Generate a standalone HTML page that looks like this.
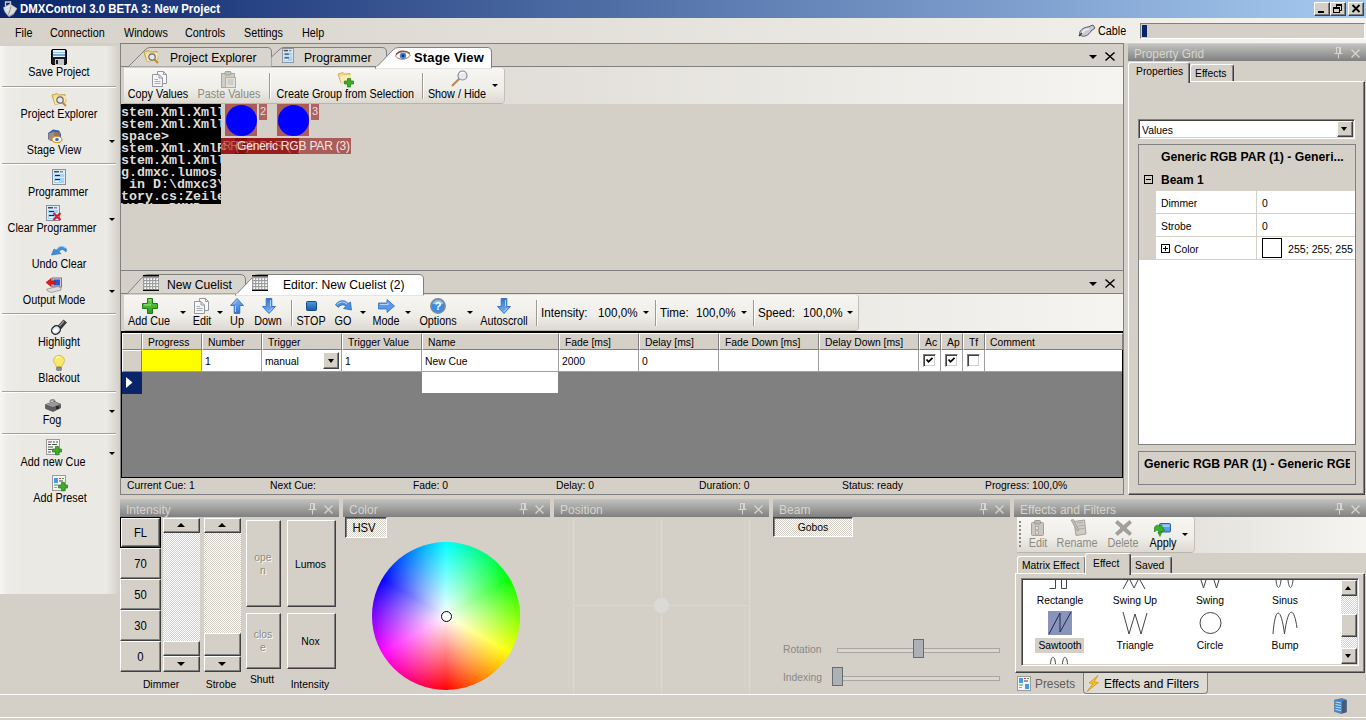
<!DOCTYPE html>
<html lang="en">
<head>
<meta charset="utf-8">
<title>DMXControl 3.0 BETA 3: New Project</title>
<style>
html,body{margin:0;padding:0}
body{width:1366px;height:720px;background:#d4d0c8;font-family:"Liberation Sans",sans-serif;font-size:11px;color:#000;position:relative;overflow:hidden}
.a{position:absolute}
.t{position:absolute;white-space:nowrap;line-height:14px;height:14px}
.c{text-align:center}
.f12{font-size:12px;transform:scaleX(.9);transform-origin:0 50%}
.f12.c,.f13.c{transform-origin:50% 50%}
.f13{font-size:13px;transform:scaleX(.935);transform-origin:0 50%}
.ms{font-size:11px;transform:scaleX(.94);transform-origin:0 50%}
.ms.c{transform-origin:50% 50%}
.b{font-weight:bold}
.dis{color:#8d8a82}
.sepv{position:absolute;width:1px;background:#9d9a93;box-shadow:1px 0 0 #fff}
.seph{position:absolute;height:1px;background:#a5a29b;box-shadow:0 1px 0 #fff;left:2px;width:114px}
.arr{position:absolute;width:0;height:0;border-left:3px solid transparent;border-right:3px solid transparent;border-top:3px solid #000}
.btn{position:absolute;background:#d4d0c8;box-sizing:border-box;border:1px solid;border-color:#fff #404040 #404040 #fff;box-shadow:inset -1px -1px 0 #808080, inset 1px 1px 0 #d4d0c8}
.sunk{position:absolute;box-sizing:border-box;border:1px solid;border-color:#808080 #fff #fff #808080}
.cap{position:absolute;height:17px;background:linear-gradient(#c2c2c0,#808080);color:#d8d5cd;font-size:13px;line-height:17px;white-space:nowrap}
svg{position:absolute;overflow:visible}
</style>
</head>
<body>
<svg width="0" height="0" style="left:0;top:0"><defs><linearGradient id="gb" x1="0" y1="0" x2="0" y2="1"><stop offset="0" stop-color="#7db4f2"/><stop offset="1" stop-color="#3474cf"/></linearGradient><linearGradient id="gs" x1="0" y1="0" x2="0" y2="1"><stop offset="0" stop-color="#4f9be2"/><stop offset="1" stop-color="#1a5aa6"/></linearGradient><linearGradient id="gg" x1="0" y1="0" x2="0" y2="1"><stop offset="0" stop-color="#6fd24f"/><stop offset="1" stop-color="#2c9a1c"/></linearGradient></defs></svg>
<!-- TITLE BAR -->
<div class="a" id="titlebar" style="left:0;top:0;width:1366px;height:18px;background:linear-gradient(90deg,#0a246a,#a6caf0)"></div>
<div class="t b" style="left:20px;top:2px;color:#fff;font-size:12px;transform:scaleX(.952);transform-origin:0 50%">DMXControl 3.0 BETA 3: New Project</div>
<!-- MENU BAR -->
<div class="a" id="menubar" style="left:0;top:18px;width:1366px;height:25px;background:linear-gradient(90deg,#d6d2ca,#f5f4f0)"></div>
<!-- title icon -->
<svg style="left:2px;top:0px" width="17" height="18" viewBox="0 0 17 18"><path d="M3.500 6 V2 H8.500 V5" fill="none" stroke="#cfcfcf" stroke-width="1.300"/><path d="M1.500 7.500 L8 4 L15 8.500 L11.500 14 L7 16.500 C4 14 2 11 1.500 7.500Z" fill="#dadada" stroke="#b5b5b5" stroke-width="0.600"/><path d="M9 6.500 L6.500 14.500" stroke="#8a8a8a" stroke-width="0.900"/><path d="M11.500 14 L7 16.500" stroke="#9a9a9a" stroke-width="1.200"/><path d="M3.500 8 L7 6.500 M3.800 10.500 L7.500 9" stroke="#f4f4f4" stroke-width="1"/></svg>
<!-- window buttons -->
<div class="btn" style="left:1314px;top:2px;width:16px;height:14px"></div>
<div class="a" style="left:1318px;top:11px;width:6px;height:2px;background:#000"></div>
<div class="btn" style="left:1330px;top:2px;width:16px;height:14px"></div>
<svg style="left:1333px;top:4px" width="10" height="10" viewBox="0 0 10 10"><path d="M3.5 1 H8.5 V6.5 H6.5 M3.5 1 V3 M3 0.5 H9" fill="none" stroke="#000" stroke-width="1"/><path d="M3 0 H9 V2 H3Z" fill="#000"/><rect x="0.5" y="3.5" width="6" height="5" fill="none" stroke="#000"/><rect x="0" y="3" width="7" height="2" fill="#000"/></svg>
<div class="btn" style="left:1348px;top:2px;width:16px;height:14px"></div>
<svg style="left:1352px;top:5px" width="8" height="7" viewBox="0 0 8 7"><path d="M0.5 0 L7.5 7 M7.5 0 L0.5 7" stroke="#000" stroke-width="1.8"/></svg>
<!-- menu items -->
<div class="t f12" style="left:15px;top:26px">File</div>
<div class="t f12" style="left:50px;top:26px">Connection</div>
<div class="t f12" style="left:124px;top:26px">Windows</div>
<div class="t f12" style="left:185px;top:26px">Controls</div>
<div class="t f12" style="left:244px;top:26px">Settings</div>
<div class="t f12" style="left:302px;top:26px">Help</div>
<svg style="left:1078px;top:23px" width="18" height="16" viewBox="0 0 18 16"><path d="M2 12 C0 8 6 4 10 4 L15 2 L17 5 L13 8 C11 12 6 15 2 12Z" fill="#c8ccd2" stroke="#555b66" stroke-width="1"/><path d="M4 11 C5 8 8 6 11 6" stroke="#fff" stroke-width="1.2" fill="none"/><path d="M1 13 L4 10" stroke="#333" stroke-width="1.5"/></svg>
<div class="t f12" style="left:1098px;top:24px">Cable</div>
<div class="sunk" style="left:1140px;top:23px;width:225px;height:16px;background:#d4d0c8"></div>
<div class="a" style="left:1142px;top:25px;width:5px;height:12px;background:#0a246a"></div>
<!-- LEFT TOOLBAR -->
<div class="a" id="lefttb" style="left:0;top:46px;width:118px;height:548px;background:linear-gradient(90deg,#f7f6f3 0,#eeece8 6%,#ebe9e4 20%,#ebe9e4 90%,#d6d3cb 100%);border-radius:0 0 4px 0"></div>
<!-- left toolbar items -->
<svg style="left:51px;top:49px" width="16" height="16" viewBox="0 0 16 16"><rect x="0.5" y="0.5" width="15" height="15" rx="1.5" fill="#1c1c1e" stroke="#000"/><rect x="2" y="1" width="12" height="7" fill="#e8f2fc"/><rect x="2" y="3" width="12" height="1" fill="#9cc3ea"/><rect x="2" y="5" width="12" height="2" fill="#6ea8e0"/><rect x="4" y="10" width="9" height="6" fill="#c8c8cc"/><rect x="5" y="11" width="2" height="4" fill="#1c1c1e"/></svg>
<div class="t f12 c" style="left:9px;top:65px;width:100px">Save Project</div>
<div class="seph" style="top:86px"></div>
<svg style="left:51px;top:92px" width="16" height="16" viewBox="0 0 16 16"><path d="M1 3 L6 1.5 L7.5 3 L14 2.5 L15 10 L4 12.5 Z" fill="#f1d98a" stroke="#b8962e" stroke-width="0.8"/><path d="M3 5 L15 4 L14.5 10.5 L4 12.5Z" fill="#f7e7a9"/><circle cx="9" cy="8" r="3.2" fill="#dfeaf5" stroke="#6b6b6b" stroke-width="1.2"/><path d="M11.5 10.5 L15 14" stroke="#c48a2a" stroke-width="2"/></svg>
<div class="t f12 c" style="left:8.5px;top:107px;width:100px">Project Explorer</div>
<svg style="left:47px;top:129px" width="16" height="15" viewBox="0 0 16 15"><path d="M1 4 L6 0.5 L12 1.5 L14 5 L14 10 L4 12 L1 10Z" fill="#2f5fb4"/><path d="M1.5 4.5 L7 2.5 L7 11 L3 11.5 L1.5 10Z" fill="#a58b78"/><path d="M7 2.5 L13 3.5 L13 7 L7 9Z" fill="#8d7766"/><ellipse cx="10" cy="10.5" rx="5" ry="3" fill="#fff" stroke="#e29a1e" stroke-width="1.2"/><circle cx="10" cy="10.5" r="1.8" fill="#3a78b8"/></svg>
<div class="t f12 c" style="left:3.5px;top:143px;width:100px">Stage View</div>
<div class="arr" style="left:109px;top:140px"></div>
<div class="seph" style="top:163px"></div>
<svg style="left:52px;top:169px" width="14" height="16" viewBox="0 0 14 16"><rect x="0.5" y="0.5" width="13" height="15" fill="#d9ecfb" stroke="#8a8f99"/><rect x="2" y="2" width="5" height="1.5" fill="#4a4a4a"/><rect x="8" y="2" width="3" height="1.5" fill="#888"/><rect x="2" y="5" width="10" height="3" fill="#a7d1f5"/><rect x="3" y="6" width="5" height="1" fill="#222"/><rect x="2" y="9" width="10" height="5" fill="#a7d1f5"/><rect x="3" y="10" width="5" height="1" fill="#222"/><rect x="3" y="12" width="4" height="1" fill="#fff"/></svg>
<div class="t f12 c" style="left:8px;top:185px;width:100px">Programmer</div>
<svg style="left:46px;top:205px" width="16" height="16" viewBox="0 0 16 16"><g><rect x="0.5" y="0.5" width="13" height="15" fill="#d9ecfb" stroke="#8a8f99"/><rect x="2" y="2" width="5" height="1.5" fill="#4a4a4a"/><rect x="8" y="2" width="3" height="1.5" fill="#888"/><rect x="2" y="5" width="10" height="3" fill="#a7d1f5"/><rect x="3" y="6" width="5" height="1" fill="#222"/><rect x="2" y="9" width="10" height="5" fill="#a7d1f5"/><rect x="3" y="10" width="5" height="1" fill="#222"/><rect x="3" y="12" width="4" height="1" fill="#fff"/></g><path d="M7.5 8 L14.5 15 M14.5 8 L7.5 15" stroke="#e01b24" stroke-width="2.2"/></svg>
<div class="t f12 c" style="left:2px;top:221px;width:100px">Clear Programmer</div>
<div class="arr" style="left:109px;top:218px"></div>
<svg style="left:51px;top:243px" width="16" height="13" viewBox="0 0 16 13"><path d="M0.5 12 L3 6 L5.5 7.5 C7 3 12 2 15.5 6 L15 9 C12 5.5 9 6 8 9 L10 10.5 Z" fill="#3d8fe0" stroke="#1f66b8" stroke-width="0.6"/><path d="M6 6 C8 2.5 12 2.5 14.5 5" stroke="#9fd0fa" stroke-width="1.2" fill="none"/></svg>
<div class="t f12 c" style="left:8.5px;top:257px;width:100px">Undo Clear</div>
<svg style="left:46px;top:277px" width="16" height="16" viewBox="0 0 16 16"><rect x="6" y="1" width="9.5" height="9" fill="#d0d0d0" stroke="#777"/><rect x="7.5" y="2.5" width="6.5" height="6" fill="#2458d8"/><path d="M1 12 L12 9.5 L15 11 L15 13 L5 15.5 L1 13.5Z" fill="#dcdcdc" stroke="#8a8a8a" stroke-width="0.7"/><path d="M0 5.5 L5 1.5 L5 4 L9 4 L9 7 L5 7 L5 9.5Z" fill="#e21c1c" stroke="#a00" stroke-width="0.5"/></svg>
<div class="t f12 c" style="left:3.5px;top:293px;width:100px">Output Mode</div>
<div class="arr" style="left:109px;top:290px"></div>
<div class="seph" style="top:313px"></div>
<svg style="left:51px;top:319px" width="16" height="16" viewBox="0 0 16 16"><path d="M6 8 L12.5 1 L15.5 3.5 L9 11Z" fill="#3a3a3a" stroke="#111" stroke-width="0.6"/><path d="M8 7.5 L13 2" stroke="#9a9a9a" stroke-width="1.2"/><ellipse cx="5" cy="11" rx="4.6" ry="4" transform="rotate(-40 5 11)" fill="#d8e6f2" stroke="#222" stroke-width="1.3"/><ellipse cx="4.5" cy="11.5" rx="2.5" ry="2" transform="rotate(-40 4.5 11.5)" fill="#fff"/></svg>
<div class="t f12 c" style="left:9px;top:335px;width:100px">Highlight</div>
<svg style="left:53px;top:355px" width="12" height="16" viewBox="0 0 12 16"><path d="M6 0.5 C2.5 0.5 0.5 3 0.5 5.5 C0.5 8 3 9.5 3.5 12 L8.5 12 C9 9.5 11.500 8 11.5 5.500 C11.5 3 9.5 0.5 6 0.5Z" fill="#f6ea6c" stroke="#c9b23a" stroke-width="0.8"/><path d="M3 3.5 C4 2 6 1.800 7 2.200" stroke="#fffbd0" stroke-width="1.4" fill="none"/><rect x="3.5" y="12" width="5" height="3.500" rx="1" fill="#8a8c94" stroke="#555" stroke-width="0.5"/></svg>
<div class="t f12 c" style="left:8.5px;top:371px;width:100px">Blackout</div>
<div class="seph" style="top:391px"></div>
<svg style="left:45px;top:399px" width="16" height="13" viewBox="0 0 16 13"><path d="M5 3 C5 0 10 0 10 3" fill="none" stroke="#888" stroke-width="1.3"/><path d="M0.5 5.500 L9 2.500 L15.5 5 L15.5 9 L8 12.500 L0.5 9.500Z" fill="#5e5e5e" stroke="#3a3a3a" stroke-width="0.6"/><path d="M0.5 5.500 L9 2.500 L15.500 5 L8 8Z" fill="#9a9a9a"/><rect x="11" y="7" width="3" height="3" fill="#2a2a2a"/></svg>
<div class="t f12 c" style="left:2px;top:413px;width:100px">Fog</div>
<div class="arr" style="left:109px;top:410px"></div>
<div class="seph" style="top:433px"></div>
<svg style="left:46px;top:439px" width="16" height="16" viewBox="0 0 16 16"><rect x="0.5" y="0.5" width="13" height="15" fill="#f4f4f4" stroke="#9a9a9a"/><path d="M2 3 H6 M7 3 H9 M10 3 H12 M2 5.500 H5 M6 5.500 H11 M2 8 H7 M2 10.500 H6 M2 13 H5" stroke="#555" stroke-width="1"/><path d="M9.500 7.500 H12.500 V10 H15.500 V13 H12.500 V15.800 H9.500 V13 H6.500 V10 H9.500Z" fill="#3fae2a" stroke="#1f7a12" stroke-width="0.7"/></svg>
<div class="t f12 c" style="left:2.5px;top:455px;width:100px">Add new Cue</div>
<div class="arr" style="left:109px;top:452px"></div>
<svg style="left:52px;top:475px" width="16" height="16" viewBox="0 0 16 16"><rect x="0.5" y="0.5" width="13" height="15" fill="#f4f4f4" stroke="#9a9a9a"/><rect x="2" y="3" width="4" height="5" fill="#4a98e8"/><path d="M7 3.500 H9" stroke="#d33" stroke-width="1"/><path d="M10 3.500 H12" stroke="#3a3" stroke-width="1"/><path d="M7 6 H11" stroke="#444" stroke-width="1"/><path d="M2 10 H6" stroke="#3a3" stroke-width="1"/><path d="M2 12.500 H5" stroke="#d93" stroke-width="1"/><path d="M9.500 7.500 H12.500 V10 H15.500 V13 H12.500 V15.800 H9.500 V13 H6.500 V10 H9.500Z" fill="#3fae2a" stroke="#1f7a12" stroke-width="0.7"/></svg>
<div class="t f12 c" style="left:9.5px;top:491px;width:100px">Add Preset</div>
<!-- DOC PANE 1 -->
<div class="a" id="pane1" style="left:120px;top:43px;width:1004px;height:228px;box-sizing:border-box;border:1px solid #808080;background:#d4d0c8"></div>
<div class="a" style="left:121px;top:66px;width:1002px;height:1px;background:#808080"></div>
<div class="a" id="tbpanel1" style="left:121px;top:67px;width:1002px;height:37px;background:linear-gradient(90deg,#d4d0c8,#f5f4f1)"></div>
<div class="a" id="ts1" style="left:124px;top:68px;width:380px;height:35px;background:linear-gradient(#f7f6f3,#efede8 60%,#dcd9d1);border-radius:0 3px 3px 0;box-shadow:1px 0 0 #c2bfb7, 0 1px 0 #b8b5ad"></div>
<!-- tabs 1 -->
<svg style="left:121px;top:44px" width="380" height="24" viewBox="0 0 380 24">
<path d="M7.5 22.500 L24 6 Q26 3.500 29 3.500 L146 3.500 Q150.500 3.500 150.500 8 L150.500 22.500" fill="#d8d5ce" stroke="#808080"/>
<path d="M150.500 13 L158 6 Q160 3.500 163 3.500 L261 3.500 Q265.500 3.500 265.500 8 L265.500 22.500 L150.500 22.500" fill="#d8d5ce" stroke="#808080"/>
<path d="M256 22.500 L272 6 Q274 3.500 278 3.500 L366 3.500 Q370.500 3.500 370.500 8 L370.500 24 L254 24 Z" fill="#ffffff" stroke="#808080"/>
<rect x="255" y="22.600" width="115" height="2" fill="#fff"/>
</svg>
<div class="t f13" style="left:170px;top:51px">Project Explorer</div>
<div class="t f13" style="left:304px;top:51px">Programmer</div>
<div class="t b" style="left:414px;top:51px;font-size:13px;letter-spacing:0.150px">Stage View</div>
<div class="arr" style="left:1089px;top:55px;border-left-width:4px;border-right-width:4px;border-top-width:4px"></div>
<svg style="left:1105px;top:52px" width="10" height="9" viewBox="0 0 10 9"><path d="M0.500 0.500 L9.500 8.500 M9.500 0.500 L0.500 8.500" stroke="#000" stroke-width="1.500"/></svg>
<!-- tab icons 1 -->
<svg style="left:143px;top:49px" width="16" height="16" viewBox="0 0 16 16"><path d="M1 3 L6 1.500 L7.500 3 L14 2.500 L15 10 L4 12.500 Z" fill="#f1d98a" stroke="#b8962e" stroke-width="0.800"/><path d="M3 5 L15 4 L14.500 10.500 L4 12.500Z" fill="#f7e7a9"/><circle cx="9" cy="8" r="3.200" fill="#dfeaf5" stroke="#6b6b6b" stroke-width="1.200"/><path d="M11.500 10.500 L15 14" stroke="#c48a2a" stroke-width="2"/></svg>
<svg style="left:282px;top:48px" width="12" height="15" viewBox="0 0 14 16" preserveAspectRatio="none"><rect x="0.500" y="0.500" width="13" height="15" fill="#d9ecfb" stroke="#8a8f99"/><rect x="2" y="2" width="5" height="1.500" fill="#4a4a4a"/><rect x="8" y="2" width="3" height="1.500" fill="#888"/><rect x="2" y="5" width="10" height="3" fill="#a7d1f5"/><rect x="3" y="6" width="5" height="1" fill="#222"/><rect x="2" y="9" width="10" height="5" fill="#a7d1f5"/><rect x="3" y="10" width="5" height="1" fill="#222"/><rect x="3" y="12" width="4" height="1" fill="#fff"/></svg>
<svg style="left:395px;top:50px" width="16" height="12" viewBox="0 0 16 12"><path d="M0.500 6 C3 1 11 0 15.500 5 C12 10 4 11 0.500 6Z" fill="#fff" stroke="#b0705a" stroke-width="1"/><path d="M1 4.500 C4 0.500 11 0 15 3.500" stroke="#8a4a3a" stroke-width="1.300" fill="none"/><circle cx="8" cy="5.800" r="3.200" fill="#3a8ad8"/><circle cx="8" cy="5.800" r="1.400" fill="#123"/></svg>
<!-- toolbar 1 items -->
<svg style="left:152px;top:71px" width="16" height="16" viewBox="0 0 16 16"><path d="M5.500 0.500 H11.500 L14.500 3.500 V12.500 H5.500Z" fill="#fbfbfb" stroke="#9398a0"/><path d="M11.500 0.500 V3.500 H14.500" fill="none" stroke="#9398a0"/><path d="M0.500 3.500 H7 L10.500 7 V15.500 H0.500Z" fill="#f6f6f6" stroke="#9398a0"/><path d="M7 3.500 V7 H10.500" fill="none" stroke="#9398a0"/><path d="M2.500 8.500 H6 M2.500 10.500 H8.500 M2.500 12.500 H8.500" stroke="#a9acb2" stroke-width="1"/></svg>
<div class="t f12 c" style="left:108px;top:87px;width:100px">Copy Values</div>
<svg style="left:221px;top:71px" width="16" height="17" viewBox="0 0 16 17"><rect x="0.500" y="2.500" width="13" height="14" fill="#d0cdc6" stroke="#aaa7a0"/><rect x="4" y="0.500" width="6" height="3.500" rx="1" fill="#c4c1ba" stroke="#a29f98"/><rect x="4.500" y="6.500" width="10" height="10" fill="#e4e2dc" stroke="#b0ada6"/><path d="M6.500 9 H12.500 M6.500 11 H12.500 M6.500 13 H12.500" stroke="#bbb8b1" stroke-width="1"/></svg>
<div class="t f12 c dis" style="left:179px;top:87px;width:100px">Paste Values</div>
<div class="sepv" style="left:269px;top:73px;height:26px"></div>
<svg style="left:337px;top:71px" width="17" height="17" viewBox="0 0 17 17"><path d="M1 3 L6 1.500 L7.500 3 L13 2.500 L14 10 L4 12 Z" fill="#f1d98a" stroke="#c7a642" stroke-width="0.800"/><path d="M3 5 L14 4 L13.500 10 L4 12Z" fill="#f8ebb5"/><path d="M10.500 7.500 H13.500 V10 H16.500 V13 H13.500 V16 H10.500 V13 H7.500 V10 H10.500Z" fill="#3fae2a" stroke="#1f7a12" stroke-width="0.700"/></svg>
<div class="t f12 c" style="left:269px;top:87px;width:150px">Create Group from Selection</div>
<div class="sepv" style="left:422px;top:73px;height:26px"></div>
<svg style="left:451px;top:70px" width="17" height="17" viewBox="0 0 17 17"><path d="M1 16 L9 8" stroke="#b98a5a" stroke-width="2.200"/><circle cx="11.500" cy="5.500" r="4.500" fill="#e6eaee" stroke="#8a8e94" stroke-width="1.200"/><path d="M9 4 C10 2.500 12 2.200 13 3" stroke="#fff" stroke-width="1.200" fill="none"/></svg>
<div class="t f12 c" style="left:407px;top:87px;width:100px">Show / Hide</div>
<div class="arr" style="left:492px;top:84px"></div>
<!-- STAGE -->
<div class="a" id="console" style="left:121px;top:104px;width:100px;height:100px;background:#000;color:#dcdcdc;overflow:hidden;font-family:'Liberation Mono',monospace;font-weight:bold;font-size:13.330px;line-height:12px;white-space:pre"><div style="position:absolute;left:0;top:3px"><div style="height:12px">stem.Xml.Xmll</div><div style="height:12px">stem.Xml.Xmll</div><div style="height:12px">space&gt;</div><div style="height:12px">stem.Xml.XmlR</div><div style="height:12px">stem.Xml.Xmll</div><div style="height:12px">g.dmxc.lumos.</div><div style="height:12px"> in D:\dmxc3\</div><div style="height:12px">tory.cs:Zeile</div><div style="height:12px">WARN  DMXP</div></div></div>
<div class="a" style="left:225px;top:104px;width:32px;height:32px;background:#ab5c58"></div>
<div class="a" style="left:225.500px;top:104.500px;width:31px;height:31px;border-radius:50%;background:#0000ff"></div>
<div class="a c" style="left:259px;top:104px;width:8px;height:16px;background:#b0625e;color:#f1dcda;font-size:11px;line-height:15px">2</div>
<div class="a" style="left:277px;top:104px;width:32px;height:32px;background:#ab5c58"></div>
<div class="a" style="left:277.500px;top:104.500px;width:31px;height:31px;border-radius:50%;background:#0000ff"></div>
<div class="a c" style="left:311px;top:104px;width:8px;height:16px;background:#b0625e;color:#f1dcda;font-size:11px;line-height:15px">3</div>
<div class="a" id="fixlabel" style="left:221px;top:138px;width:130px;height:16px;background:#ab5c58;overflow:hidden;white-space:nowrap;font-size:12px;line-height:16px;color:#f6e6e4">
<div class="a" style="left:0;top:0;width:78px;height:16px;background:#991c1c"></div>
<div class="a" style="left:14px;top:0;width:12px;height:16px;background:#8b0a0a"></div>
<span class="a" style="left:-36px;top:0;opacity:0.350">Generic RGB PAR (2)</span>
<span class="a" style="left:-88px;top:0;opacity:0.350">Generic RGB PAR (1)</span>
<span class="a" style="left:16px;top:0;letter-spacing:-0.190px">Generic RGB PAR (3)</span>
</div>
<!-- DOC PANE 2 -->
<div class="a" style="left:120px;top:270px;width:1004px;height:1px;background:#808080"></div>
<div class="a" style="left:120px;top:270px;width:1px;height:225px;background:#808080"></div>
<div class="a" style="left:1123px;top:270px;width:1px;height:225px;background:#808080"></div>
<div class="a" style="left:120px;top:494px;width:1004px;height:1px;background:#808080"></div>
<div class="a" style="left:121px;top:293px;width:1002px;height:1px;background:#808080"></div>
<div class="a" id="tbpanel2" style="left:121px;top:294px;width:1002px;height:37px;background:linear-gradient(90deg,#d4d0c8,#f5f4f1)"></div>
<div class="a" id="ts2" style="left:124px;top:295px;width:734px;height:35px;background:linear-gradient(#f7f6f3,#efede8 60%,#dcd9d1);border-radius:0 3px 3px 0;box-shadow:1px 0 0 #c2bfb7, 0 1px 0 #b8b5ad"></div>
<svg style="left:121px;top:271px" width="320" height="24" viewBox="0 0 320 24">
<path d="M6.500 22.500 L21 6.500 Q23 3.500 27 3.500 L119 3.500 Q124.500 3.500 124.500 9 L124.500 22.500" fill="#d8d5ce" stroke="#808080"/>
<path d="M116 22.500 L132 6 Q134 3.500 138 3.500 L298 3.500 Q302.500 3.500 302.500 8 L302.500 24 L114 24 Z" fill="#ffffff" stroke="#808080"/>
<rect x="115" y="22.600" width="187" height="2" fill="#fff"/>
</svg>
<svg style="left:143px;top:275px" width="16" height="16" viewBox="0 0 16 16"><rect x="0" y="0" width="16" height="16" fill="#9c9c9c"/><rect x="0" y="0" width="16" height="1.300" fill="#000"/><rect x="0" y="14.800" width="16" height="1.200" fill="#000"/><rect x="1.3" y="3.2" width="1.800" height="1.800" fill="#fff"/><rect x="1.3" y="6.2" width="1.800" height="1.800" fill="#fff"/><rect x="1.3" y="9.2" width="1.800" height="1.800" fill="#fff"/><rect x="1.3" y="12.2" width="1.800" height="1.800" fill="#fff"/><rect x="4.3" y="3.2" width="1.800" height="1.800" fill="#fff"/><rect x="4.3" y="6.2" width="1.800" height="1.800" fill="#fff"/><rect x="4.3" y="9.2" width="1.800" height="1.800" fill="#fff"/><rect x="4.3" y="12.2" width="1.800" height="1.800" fill="#fff"/><rect x="7.3" y="3.2" width="1.800" height="1.800" fill="#fff"/><rect x="7.3" y="6.2" width="1.800" height="1.800" fill="#fff"/><rect x="7.3" y="9.2" width="1.800" height="1.800" fill="#fff"/><rect x="7.3" y="12.2" width="1.800" height="1.800" fill="#fff"/><rect x="10.3" y="3.2" width="1.800" height="1.800" fill="#fff"/><rect x="10.3" y="6.2" width="1.800" height="1.800" fill="#fff"/><rect x="10.3" y="9.2" width="1.800" height="1.800" fill="#fff"/><rect x="10.3" y="12.2" width="1.800" height="1.800" fill="#fff"/><rect x="13.3" y="3.2" width="1.800" height="1.800" fill="#fff"/><rect x="13.3" y="6.2" width="1.800" height="1.800" fill="#fff"/><rect x="13.3" y="9.2" width="1.800" height="1.800" fill="#fff"/><rect x="13.3" y="12.2" width="1.800" height="1.800" fill="#fff"/></svg>
<svg style="left:252px;top:275px" width="16" height="16" viewBox="0 0 16 16"><rect x="0" y="0" width="16" height="16" fill="#9c9c9c"/><rect x="0" y="0" width="16" height="1.300" fill="#000"/><rect x="0" y="14.800" width="16" height="1.200" fill="#000"/><rect x="1.3" y="3.2" width="1.800" height="1.800" fill="#fff"/><rect x="1.3" y="6.2" width="1.800" height="1.800" fill="#fff"/><rect x="1.3" y="9.2" width="1.800" height="1.800" fill="#fff"/><rect x="1.3" y="12.2" width="1.800" height="1.800" fill="#fff"/><rect x="4.3" y="3.2" width="1.800" height="1.800" fill="#fff"/><rect x="4.3" y="6.2" width="1.800" height="1.800" fill="#fff"/><rect x="4.3" y="9.2" width="1.800" height="1.800" fill="#fff"/><rect x="4.3" y="12.2" width="1.800" height="1.800" fill="#fff"/><rect x="7.3" y="3.2" width="1.800" height="1.800" fill="#fff"/><rect x="7.3" y="6.2" width="1.800" height="1.800" fill="#fff"/><rect x="7.3" y="9.2" width="1.800" height="1.800" fill="#fff"/><rect x="7.3" y="12.2" width="1.800" height="1.800" fill="#fff"/><rect x="10.3" y="3.2" width="1.800" height="1.800" fill="#fff"/><rect x="10.3" y="6.2" width="1.800" height="1.800" fill="#fff"/><rect x="10.3" y="9.2" width="1.800" height="1.800" fill="#fff"/><rect x="10.3" y="12.2" width="1.800" height="1.800" fill="#fff"/><rect x="13.3" y="3.2" width="1.800" height="1.800" fill="#fff"/><rect x="13.3" y="6.2" width="1.800" height="1.800" fill="#fff"/><rect x="13.3" y="9.2" width="1.800" height="1.800" fill="#fff"/><rect x="13.3" y="12.2" width="1.800" height="1.800" fill="#fff"/></svg>
<div class="t f13" style="left:167px;top:278px">New Cuelist</div>
<div class="t f13" style="left:283px;top:278px">Editor: New Cuelist (2)</div>
<div class="arr" style="left:1089px;top:282px;border-left-width:4px;border-right-width:4px;border-top-width:4px"></div>
<svg style="left:1105px;top:279px" width="10" height="9" viewBox="0 0 10 9"><path d="M0.500 0.500 L9.500 8.500 M9.500 0.500 L0.500 8.500" stroke="#000" stroke-width="1.500"/></svg>
<!-- toolbar 2 items -->
<svg style="left:142px;top:298px" width="16" height="16" viewBox="0 0 16 16"><path d="M5.500 0.500 H10.500 V5.500 H15.500 V10.500 H10.500 V15.500 H5.500 V10.500 H0.500 V5.500 H5.500Z" fill="url(#gg)" stroke="#1f7a12" stroke-width="1" stroke-linejoin="round"/><path d="M6.500 2 H9 M2 6.800 H9" stroke="#8fe07a" stroke-width="1.300"/></svg>
<div class="t f12 c " style="left:109.0px;top:314px;width:80px">Add Cue</div>
<div class="arr" style="left:180px;top:311px"></div>

<svg style="left:194px;top:298px" width="16" height="16" viewBox="0 0 16 16"><path d="M5.500 0.500 H11.500 L14.500 3.500 V12.500 H5.500Z" fill="#fbfbfb" stroke="#9398a0"/><path d="M11.500 0.500 V3.500 H14.500" fill="none" stroke="#9398a0"/><path d="M0.500 3.500 H7 L10.500 7 V15.500 H0.500Z" fill="#f6f6f6" stroke="#9398a0"/><path d="M7 3.500 V7 H10.500" fill="none" stroke="#9398a0"/><path d="M2.500 8.500 H6 M2.500 10.500 H8.500 M2.500 12.500 H8.500" stroke="#a9acb2" stroke-width="1"/></svg>
<div class="t f12 c " style="left:161.5px;top:314px;width:80px">Edit</div>
<div class="arr" style="left:217px;top:311px"></div>

<svg style="left:230px;top:298px" width="14" height="16" viewBox="0 0 14 16"><path d="M7 0.500 L13.500 7.500 L9.800 7.500 L9.800 15.500 L4.200 15.500 L4.200 7.500 L0.500 7.500Z" fill="url(#gb)" stroke="#2f6fc4" stroke-width="0.900"/><path d="M7 2.300 L3.300 6.300 M5.500 7.500 V14" fill="none" stroke="#b5d5f8" stroke-width="1"/></svg>
<div class="t f12 c " style="left:197.0px;top:314px;width:80px">Up</div>

<svg style="left:262px;top:298px" width="14" height="16" viewBox="0 0 14 16"><g transform="rotate(180 7 8)"><path d="M7 0.500 L13.500 7.500 L9.800 7.500 L9.800 15.500 L4.200 15.500 L4.200 7.500 L0.500 7.500Z" fill="url(#gb)" stroke="#2f6fc4" stroke-width="0.900"/><path d="M7 2.300 L3.300 6.300 M5.500 7.500 V14" fill="none" stroke="#b5d5f8" stroke-width="1"/></g></svg>
<div class="t f12 c " style="left:227.5px;top:314px;width:80px">Down</div>

<div class="sepv" style="left:291px;top:300px;height:26px"></div>
<svg style="left:306px;top:301px" width="11" height="10" viewBox="0 0 11 10"><rect x="0.500" y="0.500" width="10" height="9" rx="1" fill="url(#gs)" stroke="#174a86"/></svg>
<div class="t f12 c " style="left:271.0px;top:314px;width:80px">STOP</div>

<svg style="left:335px;top:299px" width="17" height="14" viewBox="0 0 17 14"><path d="M0.500 6 C3 1 10 0 13 4.500 L15.500 3 L16.500 11 L8.500 9.500 L11 7.500 C9 5 5 5.500 3.500 8.500 Z" fill="#4a8fe0" stroke="#2a62b0" stroke-width="0.700"/><path d="M2 5.500 C4.500 2.500 9 2 12 5" stroke="#a8d0f8" stroke-width="1.100" fill="none"/></svg>
<div class="t f12 c " style="left:303.0px;top:314px;width:80px">GO</div>
<div class="arr" style="left:360px;top:311px"></div>

<svg style="left:378px;top:299px" width="17" height="14" viewBox="0 0 17 14"><path d="M0.500 4 H9 V0.500 L16.500 7 L9 13.500 V10 H0.500Z" fill="#5b9ae6" stroke="#2f6fc4" stroke-width="0.800"/><path d="M2 5.500 H10 V3.500" fill="none" stroke="#b4d6f8" stroke-width="1.200"/></svg>
<div class="t f12 c " style="left:346.0px;top:314px;width:80px">Mode</div>
<div class="arr" style="left:405px;top:311px"></div>

<svg style="left:430px;top:298px" width="16" height="16" viewBox="0 0 16 16"><circle cx="8" cy="8" r="7.300" fill="#3f8ede" stroke="#8a8a8a" stroke-width="1.300"/><path d="M2.500 6 A5.800 5.800 0 0 1 13.500 6" fill="#8fc3f4"/><text x="8" y="12" font-size="11" font-weight="bold" font-family="Liberation Sans, sans-serif" fill="#fff" text-anchor="middle">?</text></svg>
<div class="t f12 c " style="left:398.0px;top:314px;width:80px">Options</div>
<div class="arr" style="left:467px;top:311px"></div>

<svg style="left:497px;top:298px" width="14" height="16" viewBox="0 0 14 16"><g transform="rotate(180 7 8)"><path d="M7 0.500 L13.500 7.500 L9.800 7.500 L9.800 15.500 L4.200 15.500 L4.200 7.500 L0.500 7.500Z" fill="url(#gb)" stroke="#2f6fc4" stroke-width="0.900"/><path d="M7 2.300 L3.300 6.300 M5.500 7.500 V14" fill="none" stroke="#b5d5f8" stroke-width="1"/></g></svg>
<div class="t f12 c " style="left:463.5px;top:314px;width:80px">Autoscroll</div>

<div class="sepv" style="left:536px;top:300px;height:26px"></div>
<div class="t f12" style="left:541px;top:306px;transform:scaleX(.970)">Intensity:</div><div class="t f12" style="left:598px;top:306px;transform:scaleX(.970)">100,0%</div><div class="arr" style="left:643px;top:311px"></div>

<div class="sepv" style="left:655px;top:300px;height:26px"></div>
<div class="t f12" style="left:660px;top:306px;transform:scaleX(.970)">Time:</div><div class="t f12" style="left:696px;top:306px;transform:scaleX(.970)">100,0%</div><div class="arr" style="left:741px;top:311px"></div>

<div class="sepv" style="left:753px;top:300px;height:26px"></div>
<div class="t f12" style="left:758px;top:306px;transform:scaleX(.970)">Speed:</div><div class="t f12" style="left:803px;top:306px;transform:scaleX(.970)">100,0%</div><div class="arr" style="left:847px;top:311px"></div>

<!-- GRID -->
<div class="a" id="grid" style="left:121px;top:331px;width:1002px;height:147px;background:#808080;border:1px solid #000;border-top-width:2px;box-sizing:border-box"></div>
<div class="a" style="left:122px;top:333px;width:1000px;height:17px;background:#d4d0c8"></div>
<div class="a" style="left:122px;top:333px;width:20px;height:17px;box-sizing:border-box;border:1px solid;border-color:#fff #808080 #808080 #fff;background:#d4d0c8"></div>
<div class="a" style="left:142px;top:333px;width:60px;height:17px;box-sizing:border-box;border:1px solid;border-color:#fff #808080 #808080 #fff;background:#d4d0c8"></div><div class="t ms" style="left:148px;top:335px">Progress</div>
<div class="a" style="left:202px;top:333px;width:60px;height:17px;box-sizing:border-box;border:1px solid;border-color:#fff #808080 #808080 #fff;background:#d4d0c8"></div><div class="t ms" style="left:208px;top:335px">Number</div>
<div class="a" style="left:262px;top:333px;width:80px;height:17px;box-sizing:border-box;border:1px solid;border-color:#fff #808080 #808080 #fff;background:#d4d0c8"></div><div class="t ms" style="left:268px;top:335px">Trigger</div>
<div class="a" style="left:342px;top:333px;width:80px;height:17px;box-sizing:border-box;border:1px solid;border-color:#fff #808080 #808080 #fff;background:#d4d0c8"></div><div class="t ms" style="left:348px;top:335px">Trigger Value</div>
<div class="a" style="left:422px;top:333px;width:137px;height:17px;box-sizing:border-box;border:1px solid;border-color:#fff #808080 #808080 #fff;background:#d4d0c8"></div><div class="t ms" style="left:428px;top:335px">Name</div>
<div class="a" style="left:559px;top:333px;width:80px;height:17px;box-sizing:border-box;border:1px solid;border-color:#fff #808080 #808080 #fff;background:#d4d0c8"></div><div class="t ms" style="left:565px;top:335px">Fade [ms]</div>
<div class="a" style="left:639px;top:333px;width:80px;height:17px;box-sizing:border-box;border:1px solid;border-color:#fff #808080 #808080 #fff;background:#d4d0c8"></div><div class="t ms" style="left:645px;top:335px">Delay [ms]</div>
<div class="a" style="left:719px;top:333px;width:100px;height:17px;box-sizing:border-box;border:1px solid;border-color:#fff #808080 #808080 #fff;background:#d4d0c8"></div><div class="t ms" style="left:725px;top:335px">Fade Down [ms]</div>
<div class="a" style="left:819px;top:333px;width:100px;height:17px;box-sizing:border-box;border:1px solid;border-color:#fff #808080 #808080 #fff;background:#d4d0c8"></div><div class="t ms" style="left:825px;top:335px">Delay Down [ms]</div>
<div class="a" style="left:919px;top:333px;width:22px;height:17px;box-sizing:border-box;border:1px solid;border-color:#fff #808080 #808080 #fff;background:#d4d0c8"></div><div class="t ms" style="left:925px;top:335px">Ac</div>
<div class="a" style="left:941px;top:333px;width:22px;height:17px;box-sizing:border-box;border:1px solid;border-color:#fff #808080 #808080 #fff;background:#d4d0c8"></div><div class="t ms" style="left:947px;top:335px">Ap</div>
<div class="a" style="left:963px;top:333px;width:22px;height:17px;box-sizing:border-box;border:1px solid;border-color:#fff #808080 #808080 #fff;background:#d4d0c8"></div><div class="t ms" style="left:969px;top:335px">Tf</div>
<div class="a" style="left:985px;top:333px;width:138px;height:17px;box-sizing:border-box;border:1px solid;border-color:#fff #808080 #808080 #fff;background:#d4d0c8"></div><div class="t ms" style="left:990px;top:335px">Comment</div>
<div class="a" style="left:122px;top:350px;width:20px;height:22px;box-sizing:border-box;border:1px solid;border-color:#fff #808080 #808080 #fff;background:#d4d0c8"></div>
<div class="a" style="left:142px;top:350px;width:980px;height:22px;background:#fff"></div>
<div class="a" style="left:142px;top:350px;width:59px;height:21px;background:#ffff00"></div>
<div class="a" style="left:201px;top:350px;width:1px;height:22px;background:#a0a0a0"></div><div class="a" style="left:261px;top:350px;width:1px;height:22px;background:#a0a0a0"></div><div class="a" style="left:341px;top:350px;width:1px;height:22px;background:#a0a0a0"></div><div class="a" style="left:421px;top:350px;width:1px;height:22px;background:#a0a0a0"></div><div class="a" style="left:558px;top:350px;width:1px;height:22px;background:#a0a0a0"></div><div class="a" style="left:638px;top:350px;width:1px;height:22px;background:#a0a0a0"></div><div class="a" style="left:718px;top:350px;width:1px;height:22px;background:#a0a0a0"></div><div class="a" style="left:818px;top:350px;width:1px;height:22px;background:#a0a0a0"></div><div class="a" style="left:918px;top:350px;width:1px;height:22px;background:#a0a0a0"></div><div class="a" style="left:940px;top:350px;width:1px;height:22px;background:#a0a0a0"></div><div class="a" style="left:962px;top:350px;width:1px;height:22px;background:#a0a0a0"></div><div class="a" style="left:984px;top:350px;width:1px;height:22px;background:#a0a0a0"></div>
<div class="a" style="left:142px;top:371px;width:980px;height:1px;background:#a0a0a0"></div>
<div class="t ms" style="left:205px;top:354px">1</div><div class="t ms" style="left:265px;top:354px">manual</div><div class="t ms" style="left:345px;top:354px">1</div><div class="t ms" style="left:425px;top:354px">New Cue</div><div class="t ms" style="left:562px;top:354px">2000</div><div class="t ms" style="left:642px;top:354px">0</div>
<div class="btn" style="left:323px;top:352px;width:16px;height:17px"></div><div class="arr" style="left:328px;top:359px;border-left-width:3.500px;border-right-width:3.500px;border-top-width:4px"></div>
<div class="a" style="left:923px;top:354px;width:13px;height:13px;box-sizing:border-box;background:#fff;border:1px solid;border-color:#808080 #fff #fff #808080;box-shadow:inset 1px 1px 0 #404040, inset -1px -1px 0 #d4d0c8"></div><svg style="left:926px;top:357px" width="7" height="7" viewBox="0 0 7 7"><path d="M0.500 2.500 L2.500 4.800 L6.500 0.800" fill="none" stroke="#000" stroke-width="1.800"/></svg><div class="a" style="left:945px;top:354px;width:13px;height:13px;box-sizing:border-box;background:#fff;border:1px solid;border-color:#808080 #fff #fff #808080;box-shadow:inset 1px 1px 0 #404040, inset -1px -1px 0 #d4d0c8"></div><svg style="left:948px;top:357px" width="7" height="7" viewBox="0 0 7 7"><path d="M0.500 2.500 L2.500 4.800 L6.500 0.800" fill="none" stroke="#000" stroke-width="1.800"/></svg><div class="a" style="left:967px;top:354px;width:13px;height:13px;box-sizing:border-box;background:#fff;border:1px solid;border-color:#808080 #fff #fff #808080;box-shadow:inset 1px 1px 0 #404040, inset -1px -1px 0 #d4d0c8"></div>
<div class="a" style="left:122px;top:372px;width:20px;height:22px;background:#0a246a"></div>
<svg style="left:126px;top:377px" width="7" height="11" viewBox="0 0 7 11"><path d="M0 0 L6.500 5.500 L0 11Z" fill="#fff"/></svg>
<div class="a" style="left:422px;top:372px;width:136px;height:21px;background:#fff"></div>
<!-- cue status -->
<div class="t ms" style="left:127px;top:478px">Current Cue: 1</div><div class="t ms" style="left:270px;top:478px">Next Cue:</div><div class="t ms" style="left:413px;top:478px">Fade: 0</div><div class="t ms" style="left:556px;top:478px">Delay: 0</div><div class="t ms" style="left:699px;top:478px">Duration: 0</div><div class="t ms" style="left:842px;top:478px">Status: ready</div><div class="t ms" style="left:985px;top:478px">Progress: 100,0%</div>
<!-- PROPERTY GRID -->
<div class="cap" style="left:1128px;top:44px;width:238px"><span class="a" style="left:6px;top:1px;transform:scaleX(.906);transform-origin:0 50%">Property Grid</span></div>
<svg style="left:1334px;top:47px" width="9" height="12" viewBox="0 0 9 12"><path d="M2 0.500 H7 M2.500 0.500 V6 M5.500 0.500 V6 M6.500 0.500 V6 M0.500 6.500 H8.500 M4.500 7 V11.500" fill="none" stroke="#d8d5cd" stroke-width="1"/></svg>
<svg style="left:1351px;top:49px" width="9" height="9" viewBox="0 0 9 9"><path d="M0.500 0.500 L8.500 8.500 M8.500 0.500 L0.500 8.500" stroke="#d8d5cd" stroke-width="1.300"/></svg>
<!-- tab control -->
<div class="a" style="left:1128px;top:81px;width:237px;height:414px;box-sizing:border-box;border:1px solid;border-color:#fff #404040 #404040 #fff;box-shadow:inset -1px -1px 0 #808080"></div>
<div class="a" style="left:1128px;top:62px;width:62px;height:21px;box-sizing:border-box;background:#d4d0c8;border:1px solid;border-color:#fff #404040 #d4d0c8 #fff;border-bottom:0;border-radius:3px 3px 0 0;box-shadow:inset -1px 0 0 #808080"></div>
<div class="a" style="left:1190px;top:64px;width:44px;height:17px;box-sizing:border-box;background:#d4d0c8;border:1px solid;border-color:#fff #404040 #d4d0c8 #fff;border-bottom:0;border-radius:3px 3px 0 0;box-shadow:inset -1px 0 0 #808080"></div>
<div class="t ms" style="left:1136px;top:64px">Properties</div>
<div class="t ms" style="left:1195px;top:66px">Effects</div>
<!-- combo -->
<div class="a" style="left:1138px;top:119px;width:217px;height:20px;box-sizing:border-box;background:#fff;border:1px solid;border-color:#808080 #fff #fff #808080;box-shadow:inset 1px 1px 0 #404040, inset -1px -1px 0 #d4d0c8"></div>
<div class="t ms" style="left:1142px;top:123px">Values</div>
<div class="btn" style="left:1337px;top:121px;width:16px;height:16px"></div><div class="arr" style="left:1341px;top:127px;border-left-width:3.500px;border-right-width:3.500px;border-top-width:4px"></div>
<!-- grid view -->
<div class="a" style="left:1138px;top:144px;width:218px;height:301px;box-sizing:border-box;border:1px solid #808080;background:#fff"></div>
<div class="a" style="left:1139px;top:145px;width:216px;height:46px;background:#d4d0c8"></div>
<div class="a" style="left:1139px;top:191px;width:17px;height:69px;background:#d4d0c8"></div>
<div class="a" style="left:1156px;top:213px;width:199px;height:1px;background:#d4d0c8"></div>
<div class="a" style="left:1156px;top:236px;width:199px;height:1px;background:#d4d0c8"></div>
<div class="a" style="left:1156px;top:259px;width:199px;height:1px;background:#d4d0c8"></div>
<div class="a" style="left:1256px;top:191px;width:1px;height:69px;background:#d4d0c8"></div>
<div class="t b" style="left:1161px;top:150px;font-size:12px;transform:scaleX(1.020);transform-origin:0 50%">Generic RGB PAR (1) - Generi...</div>
<div class="a" style="left:1144px;top:175px;width:9px;height:9px;box-sizing:border-box;border:1px solid #000"></div><div class="a" style="left:1146px;top:179px;width:5px;height:1px;background:#000"></div>
<div class="t b" style="left:1161px;top:173px;font-size:12px">Beam 1</div>
<div class="t ms" style="left:1161px;top:196px">Dimmer</div><div class="t ms" style="left:1262px;top:196px">0</div>
<div class="t ms" style="left:1161px;top:219px">Strobe</div><div class="t ms" style="left:1262px;top:219px">0</div>
<div class="a" style="left:1161px;top:244px;width:9px;height:9px;box-sizing:border-box;border:1px solid #000"></div><div class="a" style="left:1163px;top:248px;width:5px;height:1px;background:#000"></div><div class="a" style="left:1165px;top:246px;width:1px;height:5px;background:#000"></div>
<div class="t ms" style="left:1174px;top:242px">Color</div>
<div class="a" style="left:1262px;top:238px;width:20px;height:20px;box-sizing:border-box;border:1px solid #000;background:#fff"></div>
<div class="t ms" style="left:1288px;top:242px;transform:scaleX(.966)">255; 255; 255</div>
<!-- description -->
<div class="a" style="left:1138px;top:451px;width:218px;height:34px;box-sizing:border-box;border:1px solid #808080;overflow:hidden"><div class="t b" style="left:5px;top:5px;font-size:12px;transform:scaleX(1.020);transform-origin:0 50%">Generic RGB PAR (1) - Generic RGB PAR</div><div class="a" style="left:211px;top:0;width:6px;height:32px;background:#d4d0c8"></div></div>
<!-- BOTTOM PANELS -->
<div class="cap" style="left:120px;top:499px;width:219px;height:18px;line-height:18px"><span class="a" style="left:6px;top:2px;transform:scaleX(.925);transform-origin:0 50%">Intensity</span></div>
<svg style="left:308px;top:503px" width="9" height="12" viewBox="0 0 9 12"><path d="M2 0.500 H7 M2.500 0.500 V6 M5.500 0.500 V6 M6.500 0.500 V6 M0.500 6.500 H8.500 M4.500 7 V11.500" fill="none" stroke="#d8d5cd" stroke-width="1"/></svg><svg style="left:324px;top:505px" width="9" height="9" viewBox="0 0 9 9"><path d="M0.500 0.500 L8.500 8.500 M8.500 0.500 L0.500 8.500" stroke="#d8d5cd" stroke-width="1.300"/></svg>
<div class="cap" style="left:343px;top:499px;width:207px;height:18px;line-height:18px"><span class="a" style="left:6px;top:2px;transform:scaleX(.925);transform-origin:0 50%">Color</span></div>
<svg style="left:519px;top:503px" width="9" height="12" viewBox="0 0 9 12"><path d="M2 0.500 H7 M2.500 0.500 V6 M5.500 0.500 V6 M6.500 0.500 V6 M0.500 6.500 H8.500 M4.500 7 V11.500" fill="none" stroke="#d8d5cd" stroke-width="1"/></svg><svg style="left:535px;top:505px" width="9" height="9" viewBox="0 0 9 9"><path d="M0.500 0.500 L8.500 8.500 M8.500 0.500 L0.500 8.500" stroke="#d8d5cd" stroke-width="1.300"/></svg>
<div class="cap" style="left:554px;top:499px;width:215px;height:18px;line-height:18px"><span class="a" style="left:6px;top:2px;transform:scaleX(.925);transform-origin:0 50%">Position</span></div>
<svg style="left:738px;top:503px" width="9" height="12" viewBox="0 0 9 12"><path d="M2 0.500 H7 M2.500 0.500 V6 M5.500 0.500 V6 M6.500 0.500 V6 M0.500 6.500 H8.500 M4.500 7 V11.500" fill="none" stroke="#d8d5cd" stroke-width="1"/></svg><svg style="left:754px;top:505px" width="9" height="9" viewBox="0 0 9 9"><path d="M0.500 0.500 L8.500 8.500 M8.500 0.500 L0.500 8.500" stroke="#d8d5cd" stroke-width="1.300"/></svg>
<div class="cap" style="left:773px;top:499px;width:237px;height:18px;line-height:18px"><span class="a" style="left:6px;top:2px;transform:scaleX(.925);transform-origin:0 50%">Beam</span></div>
<svg style="left:979px;top:503px" width="9" height="12" viewBox="0 0 9 12"><path d="M2 0.500 H7 M2.500 0.500 V6 M5.500 0.500 V6 M6.500 0.500 V6 M0.500 6.500 H8.500 M4.500 7 V11.500" fill="none" stroke="#d8d5cd" stroke-width="1"/></svg><svg style="left:995px;top:505px" width="9" height="9" viewBox="0 0 9 9"><path d="M0.500 0.500 L8.500 8.500 M8.500 0.500 L0.500 8.500" stroke="#d8d5cd" stroke-width="1.300"/></svg>
<div class="cap" style="left:1014px;top:499px;width:352px;height:18px;line-height:18px"><span class="a" style="left:6px;top:2px;transform:scaleX(.925);transform-origin:0 50%">Effects and Filters</span></div>
<svg style="left:1335px;top:503px" width="9" height="12" viewBox="0 0 9 12"><path d="M2 0.500 H7 M2.500 0.500 V6 M5.500 0.500 V6 M6.500 0.500 V6 M0.500 6.500 H8.500 M4.500 7 V11.500" fill="none" stroke="#d8d5cd" stroke-width="1"/></svg><svg style="left:1351px;top:505px" width="9" height="9" viewBox="0 0 9 9"><path d="M0.500 0.500 L8.500 8.500 M8.500 0.500 L0.500 8.500" stroke="#d8d5cd" stroke-width="1.300"/></svg>
<div class="a" style="left:120px;top:517px;width:41px;height:31px;background:#000"></div>
<div class="btn" style="left:121px;top:518px;width:39px;height:29px"></div><div class="t ms c" style="left:120px;top:526px;width:41px;font-size:12px">FL</div>
<div class="btn" style="left:120px;top:548px;width:41px;height:31px"></div><div class="t ms c" style="left:120px;top:557px;width:41px;font-size:12px">70</div>
<div class="btn" style="left:120px;top:579px;width:41px;height:31px"></div><div class="t ms c" style="left:120px;top:588px;width:41px;font-size:12px">50</div>
<div class="btn" style="left:120px;top:610px;width:41px;height:31px"></div><div class="t ms c" style="left:120px;top:619px;width:41px;font-size:12px">30</div>
<div class="btn" style="left:120px;top:641px;width:41px;height:31px"></div><div class="t ms c" style="left:120px;top:650px;width:41px;font-size:12px">0</div>
<div class="a" style="left:163px;top:518px;width:37px;height:154px;background-color:#d4d0c8;background-image:conic-gradient(#fff 25%,#d4d0c8 0 50%,#fff 0 75%,#d4d0c8 0);background-size:2px 2px"></div><div class="btn" style="left:163px;top:518px;width:37px;height:15px"></div><div class="arr" style="left:177px;top:523px;border-top:0;border-bottom:4px solid #000;border-left-width:4px;border-right-width:4px"></div><div class="btn" style="left:163px;top:656px;width:37px;height:16px"></div><div class="arr" style="left:177px;top:662px;border-top-width:4px;border-left-width:4px;border-right-width:4px"></div>
<div class="a" style="left:204px;top:518px;width:37px;height:154px;background-color:#d4d0c8;background-image:conic-gradient(#fff 25%,#d4d0c8 0 50%,#fff 0 75%,#d4d0c8 0);background-size:2px 2px"></div><div class="btn" style="left:204px;top:518px;width:37px;height:15px"></div><div class="arr" style="left:218px;top:523px;border-top:0;border-bottom:4px solid #000;border-left-width:4px;border-right-width:4px"></div><div class="btn" style="left:204px;top:656px;width:37px;height:16px"></div><div class="arr" style="left:218px;top:662px;border-top-width:4px;border-left-width:4px;border-right-width:4px"></div>
<div class="btn" style="left:163px;top:641px;width:37px;height:15px"></div><div class="btn" style="left:204px;top:633px;width:37px;height:23px"></div>
<div class="btn" style="left:246px;top:520px;width:35px;height:87px"></div><div class="t ms c dis" style="left:245px;top:550px;width:36px;text-shadow:1px 1px 0 #fff">ope</div><div class="t ms c dis" style="left:245px;top:563px;width:36px;text-shadow:1px 1px 0 #fff">n</div>
<div class="btn" style="left:246px;top:613px;width:35px;height:56px"></div><div class="t ms c dis" style="left:245px;top:627px;width:36px;text-shadow:1px 1px 0 #fff">clos</div><div class="t ms c dis" style="left:245px;top:640px;width:36px;text-shadow:1px 1px 0 #fff">e</div>
<div class="btn" style="left:287px;top:520px;width:49px;height:87px"></div><div class="t ms c" style="left:286px;top:557px;width:49px">Lumos</div>
<div class="btn" style="left:287px;top:613px;width:49px;height:56px"></div><div class="t ms c" style="left:286px;top:634px;width:49px">Nox</div>
<div class="t ms c" style="left:130.5px;top:677px;width:60px">Dimmer</div><div class="t ms c" style="left:191px;top:677px;width:60px">Strobe</div><div class="t ms c" style="left:232px;top:672px;width:60px">Shutt</div><div class="t ms c" style="left:280px;top:677px;width:60px">Intensity</div>
<div class="a" style="left:345px;top:517px;width:42px;height:21px;box-sizing:border-box;border:1px solid;border-color:#404040 #fff #fff #404040;box-shadow:inset 1px 1px 0 #808080;background-color:#d4d0c8;background-image:conic-gradient(#fff 25%,#d4d0c8 0 50%,#fff 0 75%,#d4d0c8 0);background-size:2px 2px"></div><div class="t ms c" style="left:345px;top:521px;width:38px;font-size:12px">HSV</div>
<div class="a" id="wheel" style="left:372px;top:542px;width:148px;height:148px;border-radius:50%;background:radial-gradient(circle closest-side,#fff 0%,rgba(255,255,255,0) 100%),conic-gradient(#0ff 0deg,#0f0 60deg,#ff0 120deg,#f00 180deg,#f0f 240deg,#00f 300deg,#0ff 360deg)"></div>
<div class="a" style="left:441px;top:611px;width:11px;height:11px;box-sizing:border-box;border-radius:50%;background:#fff;border:1px solid #000"></div>
<div class="a" style="left:573px;top:518px;width:1px;height:176px;background:#dad8d3"></div><div class="a" style="left:661px;top:518px;width:1px;height:176px;background:#dad8d3"></div><div class="a" style="left:749px;top:518px;width:1px;height:176px;background:#dad8d3"></div><div class="a" style="left:573px;top:605px;width:177px;height:1px;background:#dad8d3"></div><div class="a" style="left:654px;top:598px;width:15px;height:15px;border-radius:50%;background:#dcdad6"></div>
<div class="a" style="left:773px;top:517px;width:80px;height:20px;box-sizing:border-box;border:1px solid;border-color:#404040 #fff #fff #404040;box-shadow:inset 1px 1px 0 #808080;background-color:#d4d0c8;background-image:conic-gradient(#fff 25%,#d4d0c8 0 50%,#fff 0 75%,#d4d0c8 0);background-size:2px 2px"></div><div class="t ms c" style="left:773px;top:520px;width:80px">Gobos</div>
<div class="t ms" style="left:783px;top:642px;color:#8a8883">Rotation</div><div class="t ms" style="left:783px;top:670px;color:#8a8883">Indexing</div>
<div class="a" style="left:837px;top:648px;width:163px;height:5px;box-sizing:border-box;border:1px solid #a8a6a0;background:#dad7d0"></div><div class="a" style="left:913px;top:639px;width:11px;height:19px;box-sizing:border-box;background:#adb1b5;border:1px solid #686b70"></div>
<div class="a" style="left:837px;top:676px;width:163px;height:5px;box-sizing:border-box;border:1px solid #a8a6a0;background:#dad7d0"></div><div class="a" style="left:832px;top:667px;width:11px;height:19px;box-sizing:border-box;background:#adb1b5;border:1px solid #686b70"></div>
<!-- EFFECTS PANEL -->
<div class="a" style="left:1014px;top:517px;width:352px;height:36px;background:linear-gradient(90deg,#d4d0c8,#f5f4f1)"></div>
<div class="a" style="left:1017px;top:517px;width:177px;height:35px;background:linear-gradient(#f7f6f3,#efede8 60%,#dcd9d1);border-radius:0 3px 3px 0;box-shadow:1px 0 0 #c2bfb7, 0 1px 0 #b8b5ad"></div>
<div class="a" style="left:1019px;top:521px;width:2px;height:28px;background-image:linear-gradient(#8d8a82 50%,transparent 0);background-size:2px 4px"></div>
<svg style="left:1031px;top:520px" width="14" height="16" viewBox="0 0 14 16"><rect x="0.500" y="2.500" width="12" height="13" rx="1" fill="#c9c6bf" stroke="#a5a29b"/><rect x="3.500" y="0.500" width="6" height="3.500" rx="1" fill="#bdbab3" stroke="#9c9992"/><rect x="4.500" y="6.500" width="3" height="3" fill="#e4e2dc" stroke="#a5a29b" stroke-width="0.800"/><rect x="4.500" y="11" width="3" height="3" fill="#e4e2dc" stroke="#a5a29b" stroke-width="0.800"/></svg><div class="t f12 c dis" style="left:1007.5px;top:536px;width:60px">Edit</div>
<svg style="left:1070px;top:519px" width="17" height="17" viewBox="0 0 17 17"><path d="M4 2.500 L14.500 1 L16 15 L6 16.500Z" fill="#cfccc5" stroke="#a5a29b"/><path d="M1 1 L7 12 L9 11 L3.500 0.500Z" fill="#bdbab3" stroke="#9c9992" stroke-width="0.700"/><path d="M7 4 L13 3.200 M8 7 L14 6.200 M9 10 L14.500 9.300" stroke="#aeaba4" stroke-width="1"/></svg><div class="t f12 c dis" style="left:1046.5px;top:536px;width:60px">Rename</div>
<svg style="left:1115px;top:520px" width="17" height="16" viewBox="0 0 17 16"><path d="M2.500 0.500 L8.500 5.500 L14.500 0.500 L16.500 3 L11 8 L16.500 13 L14.500 15.500 L8.500 10.500 L2.500 15.500 L0.500 13 L6 8 L0.500 3Z" fill="#a4a19a" stroke="#8f8c85" stroke-width="0.600"/></svg><div class="t f12 c dis" style="left:1092.5px;top:536px;width:60px">Delete</div>
<svg style="left:1154px;top:523px" width="17" height="14" viewBox="0 0 17 14"><rect x="5.500" y="0.500" width="11" height="8.500" rx="1" fill="#5aa0e8" stroke="#2d62a8"/><path d="M6.500 1.500 H15.500 V4 H6.500Z" fill="#9cc8f4"/><path d="M0.500 5 C1 2 4 1.500 6 3 L7 1.500 L10.500 7.500 L4 10 L4.800 8 C3 7 1.500 7 0.500 9 Z" fill="#3bb02b" stroke="#1e7d12" stroke-width="0.700"/><path d="M4 10 L6 13.500 L8 9Z" fill="#3bb02b" stroke="#1e7d12" stroke-width="0.500"/></svg><div class="t f12 c " style="left:1132.5px;top:536px;width:60px">Apply</div><div class="arr" style="left:1182px;top:533px"></div>
<div class="a" style="left:1015px;top:573px;width:350px;height:100px;box-sizing:border-box;border:1px solid;border-color:#fff #404040 #404040 #fff;box-shadow:inset -1px -1px 0 #808080"></div>
<div class="a" style="left:1017px;top:556px;width:69px;height:17px;box-sizing:border-box;background:#d4d0c8;border:1px solid;border-color:#fff #404040 #d4d0c8 #fff;border-bottom:0;border-radius:3px 3px 0 0;box-shadow:inset -1px 0 0 #808080"></div><div class="a" style="left:1130px;top:556px;width:42px;height:17px;box-sizing:border-box;background:#d4d0c8;border:1px solid;border-color:#fff #404040 #d4d0c8 #fff;border-bottom:0;border-radius:3px 3px 0 0;box-shadow:inset -1px 0 0 #808080"></div><div class="a" style="left:1085px;top:553px;width:46px;height:22px;box-sizing:border-box;background:#d4d0c8;border:1px solid;border-color:#fff #404040 #d4d0c8 #fff;border-bottom:0;border-radius:3px 3px 0 0;box-shadow:inset -1px 0 0 #808080"></div>
<div class="t ms" style="left:1022px;top:558px">Matrix Effect</div><div class="t ms" style="left:1093px;top:556px">Effect</div><div class="t ms" style="left:1135px;top:558px">Saved</div>
<div class="a" id="effectlist" style="left:1021px;top:578px;width:338px;height:88px;box-sizing:border-box;background:#fff;border:1px solid;border-color:#808080 #fff #fff #808080;box-shadow:inset 1px 1px 0 #404040, inset -1px -1px 0 #d4d0c8;overflow:hidden"></div>
<div class="a" style="left:1341px;top:580px;width:16px;height:84px;background-color:#d4d0c8;background-image:conic-gradient(#fff 25%,#d4d0c8 0 50%,#fff 0 75%,#d4d0c8 0);background-size:2px 2px"></div><div class="btn" style="left:1341px;top:580px;width:16px;height:16px"></div><div class="arr" style="left:1345px;top:586px;border-top:0;border-bottom:4px solid #000;border-left-width:3.500px;border-right-width:3.500px"></div><div class="btn" style="left:1341px;top:614px;width:16px;height:23px"></div><div class="btn" style="left:1341px;top:648px;width:16px;height:16px"></div><div class="arr" style="left:1345px;top:654px;border-top-width:4px;border-left-width:3.500px;border-right-width:3.500px"></div>
<div class="a" style="left:1048px;top:611px;width:24px;height:24px;background:#8a94b8"></div><div class="a" style="left:1035px;top:638px;width:49px;height:15px;background:#d4d0c8"></div>
<div class="t ms c" style="left:1019.5px;top:593px;width:80px">Rectangle</div><div class="t ms c" style="left:1094.5px;top:593px;width:80px">Swing Up</div><div class="t ms c" style="left:1169.5px;top:593px;width:80px">Swing</div><div class="t ms c" style="left:1244.5px;top:593px;width:80px">Sinus</div><div class="t ms c" style="left:1019.5px;top:638px;width:80px">Sawtooth</div><div class="t ms c" style="left:1094.5px;top:638px;width:80px">Triangle</div><div class="t ms c" style="left:1169.5px;top:638px;width:80px">Circle</div><div class="t ms c" style="left:1244.5px;top:638px;width:80px">Bump</div>
<svg style="left:1023px;top:580px" width="318" height="84" viewBox="0 0 318 84" fill="none" stroke="#444" stroke-width="1"><path d="M26.500 8.500 H32.500 V0 M38.500 0 V8.500 H43.500 V0"/><path d="M100 9 L105 0 M107 0 L111 8 L115 0 M117 0 L122 9"/><path d="M178 0 L180.500 8 L183 0 M191 0 L193.500 8 L196 0"/><path d="M253 0 C254 10 257 10 258 0 M265 0 C266 10 269 10 270 0"/><path d="M26 54 L37 33 L37 52 L48 32" stroke="#1a2a5a"/><path d="M100 32 L106 54 L112 34 L118 54 L124 33"/><circle cx="187.500" cy="43" r="10.500"/><path d="M250 54 C252 26 258 26 261.500 54 C265 26 271 26 274 48"/><path d="M27.500 84 C28 75 32 75 32.500 84 M39.500 84 C40 75 44 75 44.500 84"/></svg>
<svg style="left:1017px;top:676px" width="14" height="15" viewBox="0 0 14 15"><rect x="0.500" y="0.500" width="13" height="14" fill="#f4f4f4" stroke="#9a9a9a"/><rect x="2" y="2" width="4" height="5" fill="#4a98e8"/><path d="M7 2.500 H9" stroke="#d33"/><path d="M10 2.500 H12" stroke="#3a3"/><path d="M7 5 H11" stroke="#444"/><path d="M2 9 H6" stroke="#3a3"/><path d="M2 11.500 H5" stroke="#d93"/><rect x="8" y="8" width="4" height="5" fill="#4a98e8"/></svg><div class="t f13" style="left:1035px;top:677px;color:#5f5d58;transform:scaleX(.910)">Presets</div>
<div class="a" style="left:1083px;top:673px;width:125px;height:21px;box-sizing:border-box;background:#dedbd4;border:1px solid #808080;border-top:0;border-radius:0 0 4px 4px"></div><svg style="left:1086px;top:675px" width="14" height="17" viewBox="0 0 14 17"><path d="M12 0.500 L3 8 L7 8.500 L1 16.500 L12.500 7.500 L8 7Z" fill="#f6c02a" stroke="#c8901a" stroke-width="0.700"/></svg><div class="t f13" style="left:1104px;top:677px;transform:scaleX(.915)">Effects and Filters</div>
<svg style="left:1334px;top:698px" width="13" height="16" viewBox="0 0 13 16"><path d="M0.500 2 L8 0.500 L12.500 2 L12.500 14 L7 15.500 L0.500 13.500Z" fill="#3a8ad8" stroke="#5a6a80" stroke-width="0.600"/><path d="M8 3 L12.500 2 L12.500 14 L8 15.500Z" fill="#4a5a72"/><path d="M1.500 4 L7 5 M1.500 6.500 L7 7.500 M1.500 9 L7 10 M1.500 11.500 L7 12.500" stroke="#bfe0fa" stroke-width="1"/></svg>
<!-- STATUS BAR -->
<div class="a" id="statusbar" style="left:0;top:694px;width:1366px;height:1px;background:#fff"></div>
<div class="a" style="left:0;top:717px;width:1366px;height:1px;background:#fff"></div>
</body>
</html>
